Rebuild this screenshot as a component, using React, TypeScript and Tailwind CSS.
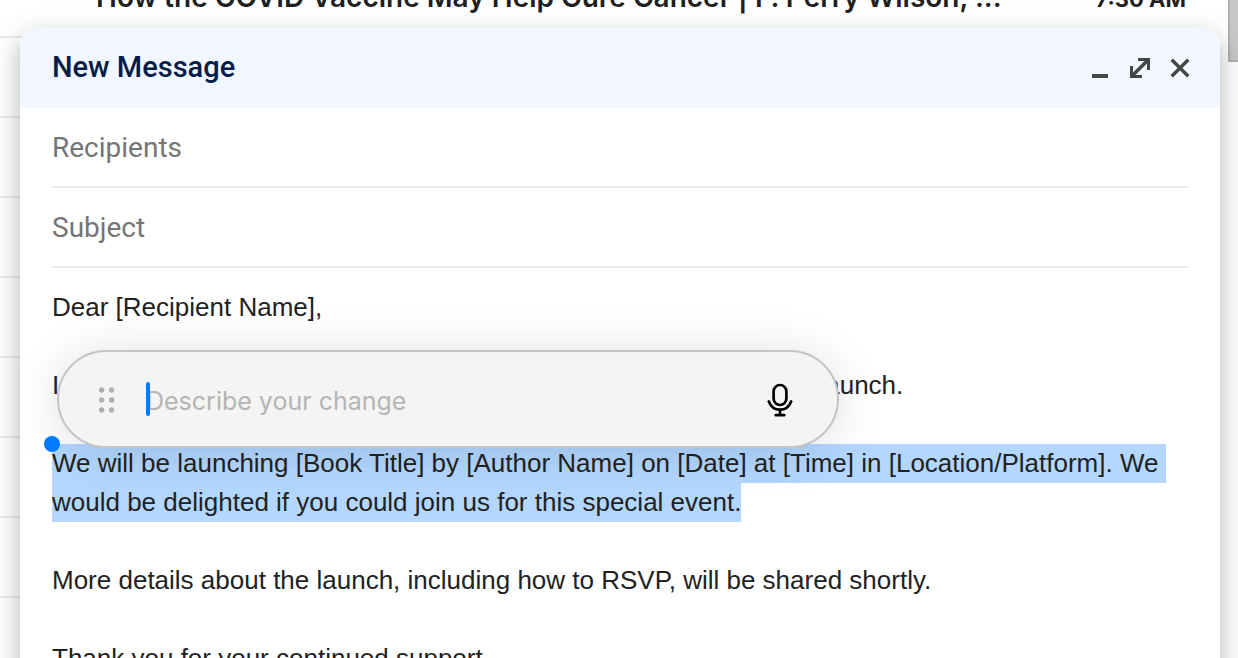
import { useState } from 'react';
import type { ReactNode } from 'react';

const inbox = [
  {
    subject: 'How the COVID Vaccine May Help Cure Cancer | F. Perry Wilson, ...',
    time: '7:30 AM',
  },
  { subject: '', time: '' },
  { subject: '', time: '' },
  { subject: '', time: '' },
  { subject: '', time: '' },
  { subject: '', time: '' },
  { subject: '', time: '' },
  { subject: '', time: '' },
  { subject: '', time: '' },
];

function Inbox() {
  return (
    <ul className="-mt-[42px] mr-10 font-['Inter',sans-serif]">
      {inbox.map((mail, index) => (
        <li
          key={index}
          className="flex h-20 items-center justify-between border-b-2 border-[#ebebeb] pl-24 pr-3 font-semibold text-[#1f1f1f]"
        >
          <span className="truncate text-[28px]">{mail.subject}</span>
          <span className="shrink-0 pt-1 text-[22px] font-bold">{mail.time}</span>
        </li>
      ))}
    </ul>
  );
}

function HeaderButton({ label, children }: { label: string; children: ReactNode }) {
  return (
    <button type="button" aria-label={label} className="flex size-10 items-center justify-center">
      <svg
        className="size-6 text-[#444746]"
        viewBox="0 0 24 24"
        fill="none"
        stroke="currentColor"
        strokeWidth="3"
        aria-hidden="true"
      >
        {children}
      </svg>
    </button>
  );
}

function Field({ label }: { label: string }) {
  return (
    <input
      type="text"
      aria-label={label}
      placeholder={label}
      className="block h-20 w-full border-b-2 border-[#ebebeb] text-[28px] text-[#1f1f1f] outline-none placeholder:text-[#757575]"
    />
  );
}

function ChangePrompt() {
  const [value, setValue] = useState('');

  return (
    <div className="absolute left-[5px] top-[62px] flex h-[98px] w-[782px] max-w-full items-center rounded-full border-2 border-[#c4c4c4] bg-[#f4f4f4] pl-[38px] pr-[43px] shadow-[0_4px_50px_rgba(0,0,0,0.13)]">
      <svg className="h-7 w-5 shrink-0 text-[#b0b0b0]" viewBox="0 0 20 28" fill="currentColor" aria-hidden="true">
        <circle cx="4.6" cy="5" r="2.7" />
        <circle cx="14.6" cy="5" r="2.7" />
        <circle cx="4.6" cy="15" r="2.7" />
        <circle cx="14.6" cy="15" r="2.7" />
        <circle cx="4.6" cy="25" r="2.7" />
        <circle cx="14.6" cy="25" r="2.7" />
      </svg>
      <div className="relative ml-[29px] flex flex-1 items-center">
        <input
          type="text"
          aria-label="Describe your change"
          placeholder="Describe your change"
          value={value}
          onChange={(e) => setValue(e.target.value)}
          className="w-full bg-transparent pt-1 font-['Inter',sans-serif] text-[25px] text-[#1f1f1f] caret-[#007aff] outline-none placeholder:text-[#b5b5b5]"
        />
        {!value && <span className="absolute left-0 h-[34px] w-1 rounded-xs bg-[#007aff]" />}
      </div>
      <button type="button" aria-label="Dictate" className="shrink-0">
        <svg
          className="h-9 w-7 text-black"
          viewBox="0 0 28 36"
          fill="none"
          stroke="currentColor"
          strokeWidth="2.7"
          strokeLinecap="round"
          aria-hidden="true"
        >
          <rect x="7.6" y="4" width="12.8" height="20" rx="6.4" />
          <path d="M2.8 20.4C4.8 25.6 8.8 28.6 14 28.6S23.2 25.6 25.2 20.4M14 28.6V34M9.8 34.2H18.2" />
        </svg>
      </button>
    </div>
  );
}

function MessageBody() {
  return (
    <div className="relative pt-5 font-['Liberation_Sans',Arial,sans-serif] text-[26px] leading-[39px] text-[#222222]">
      <div role="textbox" aria-multiline="true" aria-label="Message Body" className="space-y-[39px]">
        <p>Dear [Recipient Name],</p>
        <p>I am delighted to personally invite you to an upcoming virtual book launch.</p>
        <p>
          <mark className="block w-fit bg-[#b3d7ff] pr-2 text-inherit">
            We will be launching [Book Title] by [Author Name] on [Date] at [Time] in [Location/Platform]. We
          </mark>
          <mark className="block w-fit bg-[#b3d7ff] text-inherit">
            would be delighted if you could join us for this special event.
          </mark>
        </p>
        <p>More details about the launch, including how to RSVP, will be shared shortly.</p>
        <p>Thank you for your continued support.</p>
      </div>
      <div className="absolute inset-x-0 top-5">
        <ChangePrompt />
        <span className="absolute -left-2 top-[148px] size-4 rounded-full bg-[#007aff]" />
      </div>
    </div>
  );
}

export default function App() {
  return (
    <main className="relative h-screen overflow-hidden bg-white">
      <Inbox />
      <div className="absolute right-0 top-0 h-[62px] w-[10px] border-b-2 border-l-2 border-[#b0b0b0] bg-[#c8c8c8]" />

      <section
        role="dialog"
        aria-label="New Message"
        className="absolute left-5 right-[18px] top-7 min-h-full overflow-hidden rounded-t-2xl bg-white font-['Roboto',sans-serif] shadow-[0_16px_20px_2px_rgba(0,0,0,0.14),0_6px_28px_4px_rgba(0,0,0,0.12)]"
      >
        <header className="flex h-20 items-center justify-between bg-[#f2f6fe] pl-8 pr-5">
          <h1 className="text-[29px] font-medium text-[#041e49]">New Message</h1>
          <div className="flex">
            <HeaderButton label="Minimize">
              <path d="M4 20H20" strokeWidth="4" />
            </HeaderButton>
            <HeaderButton label="Full screen">
              <path d="M10 3.5H20.5V14M3.5 10V20.5H14" />
              <path d="M20 4L4 20" strokeWidth="3.6" />
            </HeaderButton>
            <HeaderButton label="Close">
              <path d="M3.7 3.7L20.3 20.3M20.3 3.7L3.7 20.3" strokeWidth="3.4" />
            </HeaderButton>
          </div>
        </header>
        <div className="px-8">
          <Field label="Recipients" />
          <Field label="Subject" />
          <MessageBody />
        </div>
      </section>
    </main>
  );
}
